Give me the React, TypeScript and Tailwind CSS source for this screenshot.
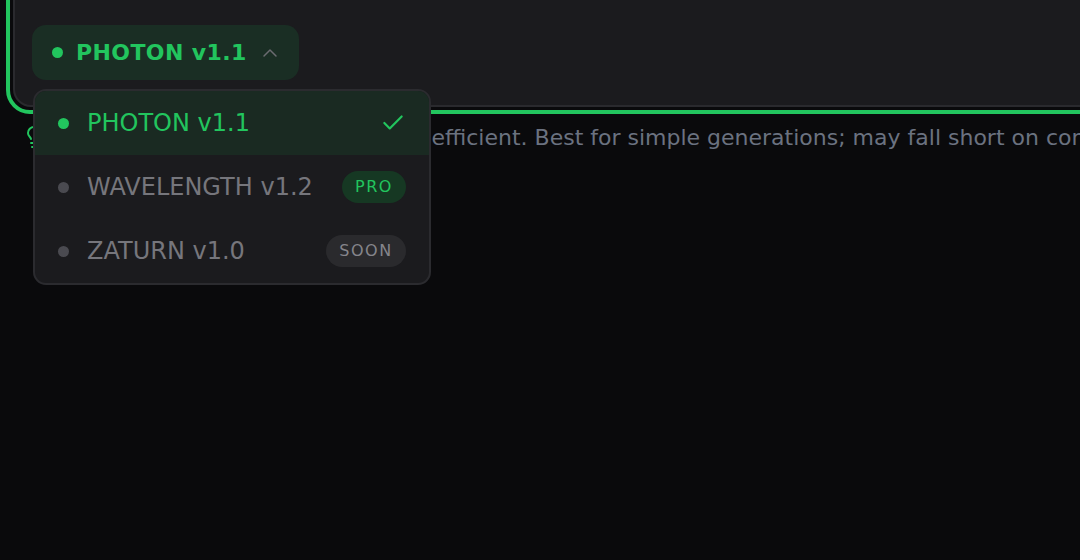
import { Check, ChevronUp, Lightbulb } from "lucide-react";

const models = [
  { name: "PHOTON v1.1", selected: true },
  { name: "WAVELENGTH v1.2", badge: "PRO" },
  { name: "ZATURN v1.0", badge: "SOON" },
];

export default function App() {
  return (
    <div className="relative w-[1080px] h-[560px] overflow-hidden bg-[#0a0a0c] font-['DejaVu_Sans',sans-serif]">
      {/* Prompt box with focus ring */}
      <div className="ml-[6px] -mt-[40px] w-[1200px] rounded-[24px] border-[4px] border-[#22c55e] p-[3px]">
        <div className="rounded-[18px] border-2 border-[#2a2a2e] bg-[#1b1b1e] pl-[17px] pt-[56px] pb-[25px]">
          <button className="flex h-[55px] items-center rounded-[14px] bg-[#1a2e24] pl-[20px] pr-[17px]">
            <span className="h-[11px] w-[11px] rounded-full bg-[#22c55e]" />
            <span className="ml-[13px] text-[22px] font-bold tracking-[0.4px] text-[#22c55e]">
              PHOTON v1.1
            </span>
            <ChevronUp size={24} strokeWidth={1.5} className="ml-[11px] text-[#6b6b70]" />
          </button>
        </div>
      </div>

      {/* Model description */}
      <div className="mt-[11px] flex h-[24px] items-center pl-[22px] whitespace-nowrap">
        <Lightbulb size={24} strokeWidth={2} className="shrink-0 text-[#22c55e]" />
        <span className="ml-[16px] text-[22px] text-[#6b7280]">
          Our lightest model, fast and cost-efficient. Best for simple generations; may fall short on complex prompts.
        </span>
      </div>

      {/* Dropdown menu */}
      <div className="absolute left-[33px] top-[89px] w-[398px] overflow-hidden rounded-[13px] border-2 border-[#2b2b2f] bg-[#1b1b1e]">
        {models.map((m) => (
          <div
            key={m.name}
            className={
              m.selected
                ? "flex h-[64px] items-center bg-[#1a2a22] pl-[23px] pr-[23px]"
                : "flex h-[64px] items-center pl-[23px] pr-[23px]"
            }
          >
            <span
              className={
                m.selected
                  ? "h-[11px] w-[11px] rounded-full bg-[#22c55e]"
                  : "h-[11px] w-[11px] rounded-full bg-[#4a4a50]"
              }
            />
            <span
              className={
                m.selected
                  ? "ml-[18px] text-[24px] text-[#22c55e]"
                  : "ml-[18px] text-[24px] text-[#76767c]"
              }
            >
              {m.name}
            </span>
            <span className="flex-1" />
            {m.selected && <Check size={26} strokeWidth={2} className="text-[#22c55e]" />}
            {m.badge === "PRO" && (
              <span className="flex h-[32px] w-[64px] items-center justify-center rounded-full bg-[#163823] text-[16px] tracking-[1.5px] text-[#22c55e]">
                PRO
              </span>
            )}
            {m.badge === "SOON" && (
              <span className="flex h-[32px] w-[80px] items-center justify-center rounded-full bg-[#2a2a2d] text-[16px] tracking-[1.5px] text-[#85858b]">
                SOON
              </span>
            )}
          </div>
        ))}
      </div>
    </div>
  );
}
